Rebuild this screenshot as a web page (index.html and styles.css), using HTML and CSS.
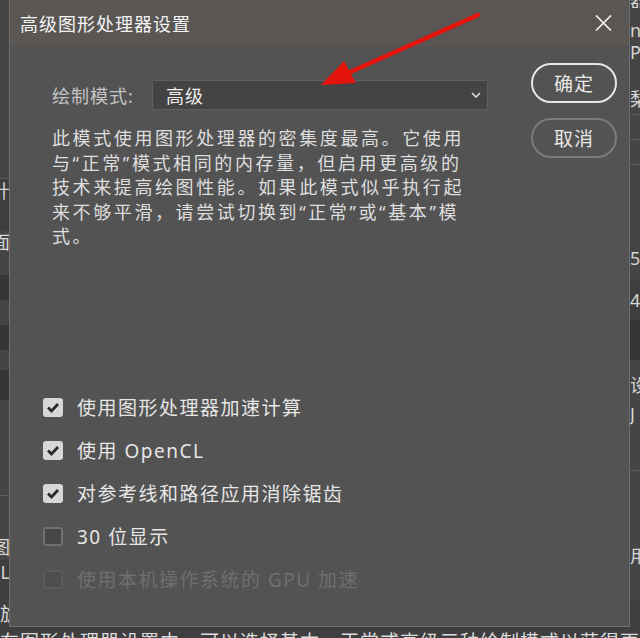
FILE: index.html
```html
<!DOCTYPE html>
<html lang="zh-CN">
<head>
<meta charset="UTF-8" />
<meta name="viewport" content="width=device-width, initial-scale=1" />
<title>高级图形处理器设置</title>
<link rel="stylesheet" href="styles.css">
</head>
<body>
<!-- 背后的 Photoshop 首选项窗口，只露出边缘 -->
<div class="desk">
  <div class="strips">
    <div class="strip strip-left">
      <div class="band" style="height:178px"></div>
      <div class="band line dark" style="height:52px"><span>计</span></div>
      <div class="band" style="height:45px"><span>面</span></div>
      <div class="band darker" style="height:25px"></div>
      <div class="band" style="height:25px"></div>
      <div class="band darker" style="height:25px"></div>
      <div class="band" style="height:20px"></div>
      <div class="band darker" style="height:30px"></div>
      <div class="band" style="height:95px"></div>
      <div class="band line" style="height:40px"></div>
      <div class="band" style="height:25px"><span>图</span></div>
      <div class="band dark" style="height:40px"><span>L</span></div>
    </div>
    <div class="strip strip-right">
      <div class="band" style="height:8px;line-height:0"><span>器</span></div>
      <div class="band" style="height:32px;line-height:44px"><span>n</span></div>
      <div class="band" style="height:24px"><span>P</span></div>
      <div class="band" style="height:50px;line-height:70px"><span>梨</span></div>
      <div class="band line" style="height:25px"></div>
      <div class="band line" style="height:25px"></div>
      <div class="band line" style="height:76px"></div>
      <div class="band" style="height:40px;line-height:36px"><span>5</span></div>
      <div class="band dark" style="height:40px;line-height:40px"><span>4</span></div>
      <div class="band darker" style="height:40px"></div>
      <div class="band" style="height:40px;line-height:50px"><span>设</span></div>
      <div class="band" style="height:70px;line-height:28px"><span>J</span></div>
      <div class="band line" style="height:70px"></div>
      <div class="band" style="height:60px;line-height:32px"><span>用</span></div>
    </div>
  </div>
  <div class="bottom-text">
    <p>旋转视图工具可以任意旋转画布，以便从任意角度绘制，不会产生扭曲。/</p>
    <p>在图形处理器设置中，可以选择基本、正常或高级三种绘制模式以获得更佳的性能</p>
  </div>
</div>

<div class="dialog">
  <div class="titlebar">
    <span class="title">高级图形处理器设置</span>
    <svg class="close" width="17" height="16" viewBox="0 0 17 16" aria-hidden="true">
      <path d="M1 0.5 L16 15.5 M16 0.5 L1 15.5" />
    </svg>
  </div>

  <div class="body">
    <div class="main">
      <div class="mode-row">
        <span class="mode-label">绘制模式:</span>
        <div class="select">
          <span>高级</span>
          <svg class="chevron" width="10" height="6" viewBox="0 0 10 6" aria-hidden="true">
            <path d="M1 1 L5 5 L9 1" />
          </svg>
        </div>
      </div>

      <p class="desc">此模式使用图形处理器的密集度最高。它使用<br>与“正常”模式相同的内存量，但启用更高级的<br>技术来提高绘图性能。如果此模式似乎执行起<br>来不够平滑，请尝试切换到“正常”或“基本”模<br>式。</p>

      <ul class="options">
        <li class="option">
          <span class="check on"><svg viewBox="0 0 20 19"><path d="M5 9.5 L8.5 13 L15 6" /></svg></span>
          使用图形处理器加速计算
        </li>
        <li class="option">
          <span class="check on"><svg viewBox="0 0 20 19"><path d="M5 9.5 L8.5 13 L15 6" /></svg></span>
          使用 OpenCL
        </li>
        <li class="option">
          <span class="check on"><svg viewBox="0 0 20 19"><path d="M5 9.5 L8.5 13 L15 6" /></svg></span>
          对参考线和路径应用消除锯齿
        </li>
        <li class="option">
          <span class="check"></span>
          30 位显示
        </li>
        <li class="option disabled">
          <span class="check"></span>
          使用本机操作系统的 GPU 加速
        </li>
      </ul>
    </div>

    <div class="actions">
      <button class="btn primary">确定</button>
      <button class="btn">取消</button>
    </div>
  </div>
</div>

<!-- 截图上的红色标注箭头 -->
<svg class="annotation" width="640" height="638" viewBox="0 0 640 638" aria-hidden="true">
  <path d="M478 15 L348 73" />
  <polygon points="321,85 344,61 356,83" />
</svg>
</body>
</html>
```

FILE: styles.css
```css
html, body {
  margin: 0;
  padding: 0;
}
body {
  width: 640px;
  height: 638px;
  overflow: hidden;
  position: relative;
  background: #424242;
  font-family: "Noto Sans", "Noto Sans CJK SC", sans-serif;
}

/* Backdrop window */
.desk {
  height: 638px;
  display: flex;
  flex-direction: column;
}
.strips {
  flex: 0 0 600px;
  display: flex;
  justify-content: space-between;
}
.strip {
  width: 10px;
  overflow: hidden;
  background: #454545;
}
.band {
  display: flex;
  justify-content: flex-end;
  line-height: 24px;
  font-size: 18px;
  color: #d6d6d6;
  white-space: nowrap;
  overflow: hidden;
}
.strip-right .band {
  justify-content: flex-start;
}
.band.line {
  border-top: 1px solid #5c5c5c;
  box-sizing: border-box;
}
.band.dark { background: #3e3e3e; }
.band.darker { background: #363636; }
.bottom-text {
  background: #3f3f3f;
  color: #dcdcdc;
  font-size: 19px;
  letter-spacing: 1px;
  white-space: nowrap;
  overflow: hidden;
}
.bottom-text p {
  margin: 0;
  height: 28px;
  line-height: 28px;
}

/* Dialog */
.dialog {
  position: absolute;
  left: 9px;
  top: -1px;
  width: 621px;
  height: 628px;
  box-sizing: border-box;
  border: 1px solid #6e6e6e;
  background: #535353;
  color: #e2e2e2;
  display: flex;
  flex-direction: column;
}
.titlebar {
  flex: 0 0 46px;
  background: #5a5654;
  display: flex;
  align-items: center;
  justify-content: space-between;
  padding: 0 17px 0 10px;
}
.title {
  font-size: 18px;
  letter-spacing: 1px;
  color: #f4f4f4;
}
.close path {
  stroke: #f0f0f0;
  stroke-width: 1.7;
  fill: none;
}

.body {
  display: flex;
  padding: 17px 12px 0 33px;
}
.main {
  flex: 1;
}

.mode-row {
  display: flex;
  align-items: center;
  margin: 17px 0 0 9px;
  height: 30px;
}
.mode-label {
  width: 100px;
  font-size: 18px;
  letter-spacing: 1px;
  color: #c4c4c4;
}
.select {
  width: 336px;
  height: 30px;
  box-sizing: border-box;
  border: 1px solid #5f5f5f;
  border-radius: 2px;
  background: #444444;
  display: flex;
  align-items: center;
  justify-content: space-between;
  padding: 0 6px 0 13px;
  font-size: 18px;
  letter-spacing: 1px;
  color: #ededed;
}
.chevron path {
  stroke: #dcdcdc;
  stroke-width: 1.6;
  fill: none;
}

.desc {
  margin: 16px 0 0 9px;
  font-size: 18px;
  line-height: 24.5px;
  letter-spacing: 2.6px;
  color: #dedede;
}

.options {
  list-style: none;
  margin: 137px 0 0;
  padding: 0;
}
.option {
  height: 43px;
  display: flex;
  align-items: center;
  gap: 14px;
  font-size: 19px;
  letter-spacing: 1.5px;
  color: #e6e6e6;
}
.option.disabled {
  color: #6f6f6f;
}
.check {
  width: 20px;
  height: 19px;
  box-sizing: border-box;
  border-radius: 3px;
  border: 2px solid #6f6f6f;
  background: #464646;
  flex: 0 0 auto;
}
.check.on {
  border: none;
  background: #d7d7d7;
}
.check svg {
  display: block;
  width: 20px;
  height: 19px;
}
.check svg path {
  stroke: #2a2a2a;
  stroke-width: 2.8;
  fill: none;
}
.disabled .check {
  border-color: #5b5b5b;
  background: #4e4e4e;
}

.actions {
  width: 86px;
  display: flex;
  flex-direction: column;
  gap: 15px;
}
.btn {
  height: 40px;
  border-radius: 20px;
  border: 2px solid #7b7b7b;
  background: transparent;
  color: #e8e8e8;
  font-family: inherit;
  font-size: 19px;
  letter-spacing: 1px;
  padding: 0;
}
.btn.primary {
  border-color: #e6e6e6;
}

/* Annotation overlay */
.annotation {
  position: absolute;
  left: 0;
  top: 0;
  pointer-events: none;
}
.annotation path {
  stroke: #e4130c;
  stroke-width: 4.5;
  stroke-linecap: round;
  fill: none;
}
.annotation polygon {
  fill: #e4130c;
}
```
